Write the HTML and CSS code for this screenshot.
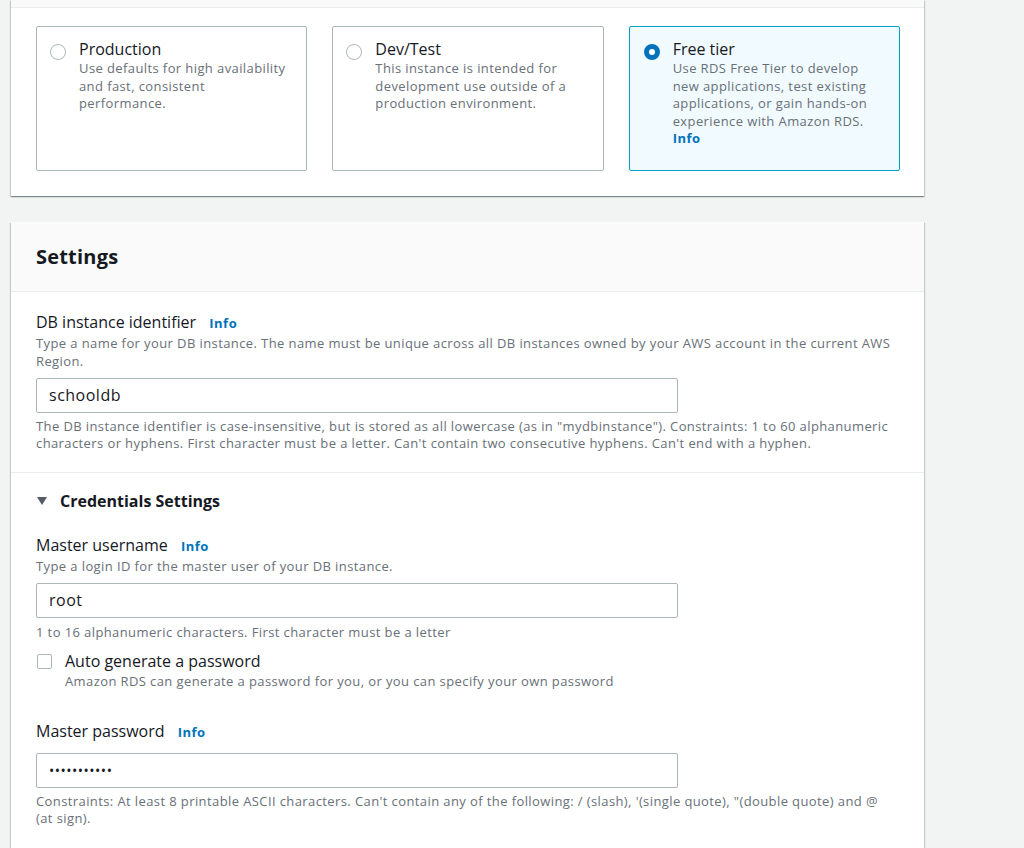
FILE: index.html
```html
<!DOCTYPE html>
<html lang="en">
<head>
<meta charset="utf-8">
<title>Create database</title>
<link rel="stylesheet" href="styles.css">
</head>
<body>
<div class="page">
  <section class="panel panel-top">
    <div class="panel-top-strip"></div>
    <div class="tiles">
      <div class="tile">
        <span class="radio"></span>
        <div class="tile-text">
          <div class="tile-title">Production</div>
          <div class="tile-desc">Use defaults for high availability and fast, consistent performance.</div>
        </div>
      </div>
      <div class="tile">
        <span class="radio"></span>
        <div class="tile-text">
          <div class="tile-title">Dev/Test</div>
          <div class="tile-desc">This instance is intended for development use outside of a production environment.</div>
        </div>
      </div>
      <div class="tile tile-selected">
        <span class="radio radio-checked"></span>
        <div class="tile-text">
          <div class="tile-title">Free tier</div>
          <div class="tile-desc">Use RDS Free Tier to develop new applications, test existing applications, or gain hands-on experience with Amazon RDS.</div>
          <a class="info info-block">Info</a>
        </div>
      </div>
    </div>
  </section>

  <section class="panel panel-settings">
    <header class="panel-header"><h2>Settings</h2></header>
    <div class="panel-body">
      <div class="field">
        <div class="label">DB instance identifier <a class="info">Info</a></div>
        <div class="desc">Type a name for your DB instance. The name must be unique across all DB instances owned by your AWS account in the current AWS Region.</div>
        <div class="input">schooldb</div>
        <div class="hint">The DB instance identifier is case-insensitive, but is stored as all lowercase (as in "mydbinstance"). Constraints: 1 to 60 alphanumeric characters or hyphens. First character must be a letter. Can't contain two consecutive hyphens. Can't end with a hyphen.</div>
      </div>
    </div>
    <div class="panel-body panel-body-divided">
      <div class="expander"><span class="caret"></span>Credentials Settings</div>
      <div class="field field-user">
        <div class="label">Master username <a class="info">Info</a></div>
        <div class="desc">Type a login ID for the master user of your DB instance.</div>
        <div class="input">root</div>
        <div class="hint hint-single">1 to 16 alphanumeric characters. First character must be a letter</div>
        <div class="check-row">
          <span class="checkbox"></span>
          <div>
            <div class="check-label">Auto generate a password</div>
            <div class="check-desc">Amazon RDS can generate a password for you, or you can specify your own password</div>
          </div>
        </div>
      </div>
      <div class="field field-pass">
        <div class="label">Master password <a class="info">Info</a></div>
        <div class="input input-pass">•••••••••••</div>
        <div class="hint">Constraints: At least 8 printable ASCII characters. Can't contain any of the following: / (slash), '(single quote), "(double quote) and @ (at&nbsp;sign).</div>
      </div>
    </div>
  </section>
</div>
</body>
</html>
```

FILE: styles.css
```css
* { box-sizing: border-box; }
html, body { margin: 0; padding: 0; }
body {
  background: #f2f3f3;
  font-family: "Open Sans", "Noto Sans", sans-serif;
  color: #16191f;
  overflow: hidden;
  height: 848px;
}
.page {
  width: 913px;
  margin-left: 11px;
  display: flex;
  flex-direction: column;
  gap: 26px;
}
.panel {
  background: #fff;
  box-shadow: 0 1px 1px 0 rgba(0,28,36,.3), 1px 1px 1px 0 rgba(0,28,36,.15), -1px 1px 1px 0 rgba(0,28,36,.15);
}
.panel-top-strip {
  height: 8px;
  background: #fafafa;
  border-bottom: 1px solid #eaeded;
}
.tiles {
  display: flex;
  gap: 25px;
  padding: 18px 24px 25px 25px;
}
.tile {
  width: 272px;
  height: 145px;
  border: 1px solid #aab7b8;
  border-radius: 2px;
  display: flex;
  gap: 13px;
  padding: 17px 16px 0 13px;
}
.tile-selected {
  background: #f1faff;
  border-color: #00a1c9;
  padding-left: 14px;
  padding-right: 15px;
}
.radio {
  flex: none;
  width: 16px;
  height: 16px;
  border: 1px solid #aab7b8;
  border-radius: 50%;
  background: #fff;
}
.radio-checked {
  border: 5px solid #0073bb;
}
.tile-text { margin-top: -6px; }
.tile-title {
  font-size: 16px;
  line-height: 22px;
}
.tile-desc {
  font-size: 13px;
  letter-spacing: 0.4px;
  line-height: 17.5px;
  color: #687078;
}
.info {
  color: #0073bb;
  font-weight: 700;
  font-size: 13px;
  letter-spacing: 0.5px;
  margin-left: 9px;
}
.info-block {
  display: block;
  margin-left: 0;
  line-height: 17px;
}
.panel-header {
  height: 70px;
  background: #fafafa;
  border-bottom: 1px solid #eaeded;
  padding: 0 25px;
  display: flex;
  align-items: center;
}
.panel-header h2 {
  margin: 0;
  font-size: 20px;
  font-weight: 700;
  line-height: 26px;
  letter-spacing: 0.2px;
}
.panel-body {
  padding: 20px 24px 20px 25px;
}
.panel-body-divided {
  border-top: 1px solid #eaeded;
  padding-top: 17px;
  padding-bottom: 60px;
}
.label {
  font-size: 16px;
  line-height: 20px;
}
.desc {
  font-size: 13px;
  letter-spacing: 0.4px;
  line-height: 18px;
  color: #687078;
  margin-top: 1px;
}
.input {
  width: 642px;
  height: 35px;
  margin-top: 8px;
  border: 1px solid #aab7b8;
  border-radius: 2px;
  padding: 0 12px;
  font-size: 16px;
  letter-spacing: 0.5px;
  line-height: 33px;
  color: #16191f;
}
.input-pass {
  margin-top: 11px;
  font-size: 14px;
  letter-spacing: 0.5px;
}
.hint {
  font-size: 13px;
  letter-spacing: 0.4px;
  line-height: 17px;
  color: #687078;
  margin-top: 5px;
}
.hint-single { line-height: 18px; }
.expander {
  font-size: 16px;
  font-weight: 700;
  line-height: 22px;
  display: flex;
  align-items: center;
}
.caret {
  width: 0;
  height: 0;
  border-left: 5px solid transparent;
  border-right: 5px solid transparent;
  border-top: 8px solid #545b64;
  margin-left: 1px;
  margin-right: 13px;
}
.field-user { margin-top: 23px; }
.check-row {
  display: flex;
  gap: 13px;
  margin-top: 9px;
}
.checkbox {
  flex: none;
  width: 15px;
  height: 15px;
  border: 1px solid #aab7b8;
  border-radius: 2px;
  margin-top: 4px;
  margin-left: 1px;
}
.check-label {
  font-size: 16px;
  line-height: 22px;
}
.check-desc {
  font-size: 13px;
  letter-spacing: 0.4px;
  line-height: 18px;
  color: #687078;
}
.field-pass { margin-top: 31px; }
```
